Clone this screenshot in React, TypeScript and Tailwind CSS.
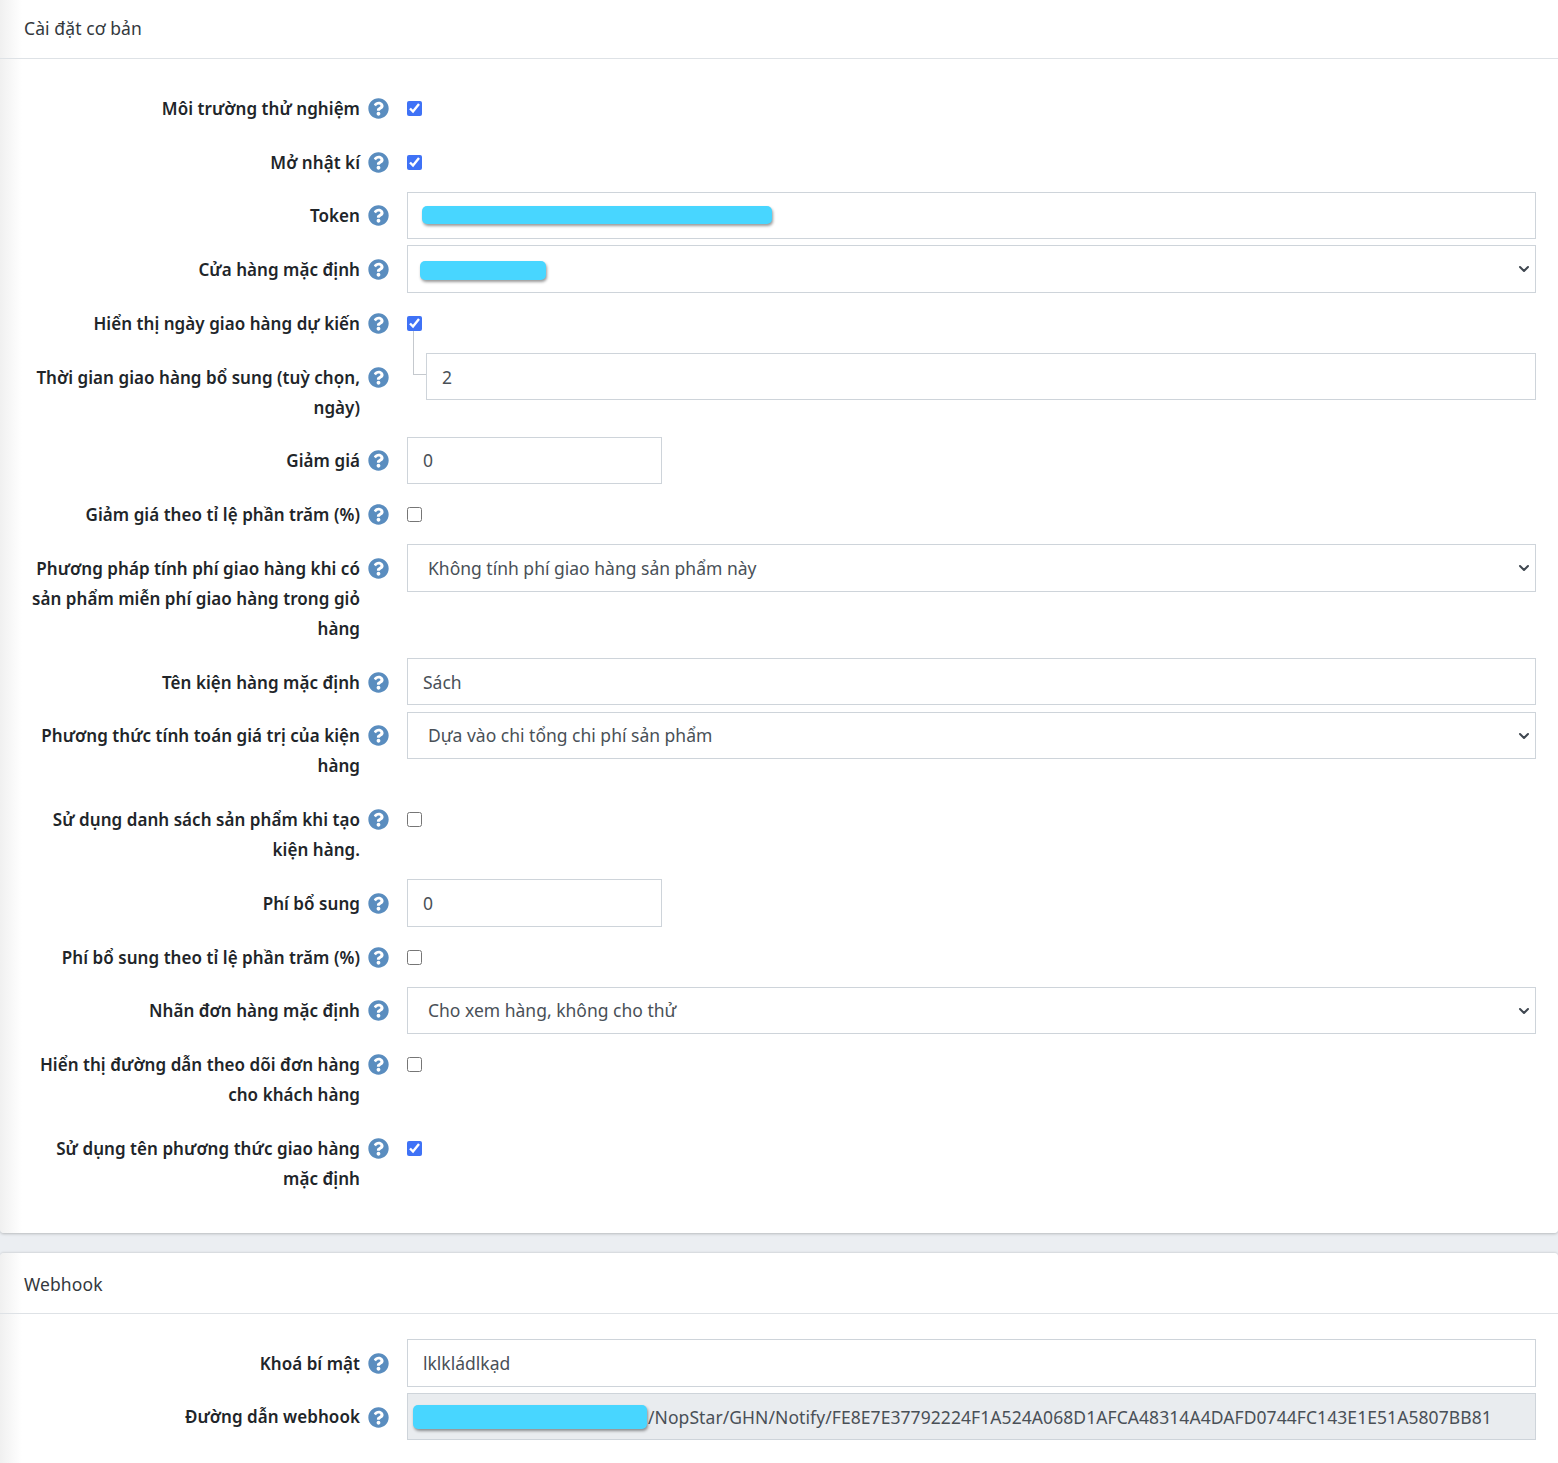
import { FaQuestionCircle } from "react-icons/fa";
import { ChevronDown } from "lucide-react";

const INPUT =
  "block w-full h-[47.5px] border border-[#ced4da] bg-white px-[15px] text-[17.5px] text-[#495057] outline-none";

function Blur({ className }: { className: string }) {
  return (
    <div
      className={`absolute rounded-[5px] bg-[#48d6ff] shadow-[1px_2px_3px_rgba(0,0,0,0.4)] ${className}`}
    />
  );
}

function Row({
  label,
  children,
  lines = 1,
}: {
  label: string;
  children: React.ReactNode;
  lines?: number;
}) {
  return (
    <div className="flex" style={{ height: 23.75 + lines * 30 }}>
      <div className="flex w-[407px] shrink-0 justify-end pt-[9.6px] pr-[18px]">
        <label className="w-[335px] text-right text-[17px] leading-[30px] font-semibold tracking-[0.05px] text-[#212529]">
          {label}
        </label>
        <FaQuestionCircle className="mt-[4.2px] ml-2 shrink-0 text-[21px] text-[#5a8dbf]" />
      </div>
      <div className="min-w-0 flex-1 pr-[22px]">{children}</div>
    </div>
  );
}

function Check({ checked }: { checked?: boolean }) {
  return (
    <input
      type="checkbox"
      readOnly
      checked={!!checked}
      className="mt-[16.6px] block h-[15px] w-[15px] accent-[#3f72f6]"
    />
  );
}

function Text({ value, short }: { value: string; short?: boolean }) {
  return <input readOnly value={value} className={`${INPUT} ${short ? "!w-[255px]" : ""}`} />;
}

function Select({ value, children }: { value: string; children?: React.ReactNode }) {
  return (
    <div className="relative">
      <select
        value={value}
        onChange={() => {}}
        className={`${INPUT} appearance-none rounded-none pl-[20px]`}
      >
        <option>{value}</option>
      </select>
      <ChevronDown
        strokeWidth={3}
        className="pointer-events-none absolute top-[16px] right-[4px] h-4 w-4 text-[#3f4750]"
      />
      {children}
    </div>
  );
}

export default function App() {
  return (
    <div className="min-h-[1463px] overflow-hidden bg-[#ebeef2] font-['Noto_Sans',sans-serif]">
      <section className="h-[1233px] rounded-b-[4px] bg-[linear-gradient(90deg,#f0f0f0,#fff_22px)] shadow-[0_1px_3px_rgba(0,0,0,0.22)]">
        <header className="h-[59px] border-b border-[#dee2e6] pt-[15px] pl-6 text-[17.5px] leading-[26px] tracking-[0.1px] text-[#33383d]">
          Cài đặt cơ bản
        </header>
        <div className="pt-[25.2px]">
          <Row label="Môi trường thử nghiệm">
            <Check checked />
          </Row>
          <Row label="Mở nhật kí">
            <Check checked />
          </Row>
          <Row label="Token">
            <div className="relative">
              <Text value="" />
              <Blur className="top-[14px] left-[15px] h-[18px] w-[350px]" />
            </div>
          </Row>
          <Row label="Cửa hàng mặc định">
            <Select value="">
              <Blur className="top-[16px] left-[13px] h-[19px] w-[126px]" />
            </Select>
          </Row>
          <Row label="Hiển thị ngày giao hàng dự kiến">
            <div className="relative">
              <Check checked />
              {/* nhanh noi tu checkbox xuong o nhap */}
              <div className="absolute top-[15px] left-[6px] h-[44px] w-[13px] border-b border-l border-[#c5c9ce]" />
            </div>
          </Row>
          <Row label="Thời gian giao hàng bổ sung (tuỳ chọn, ngày)" lines={2}>
            <div className="pl-[19px]">
              <Text value="2" />
            </div>
          </Row>
          <Row label="Giảm giá">
            <Text value="0" short />
          </Row>
          <Row label="Giảm giá theo tỉ lệ phần trăm (%)">
            <Check />
          </Row>
          <Row
            label="Phương pháp tính phí giao hàng khi có sản phẩm miễn phí giao hàng trong giỏ hàng"
            lines={3}
          >
            <Select value="Không tính phí giao hàng sản phẩm này" />
          </Row>
          <Row label="Tên kiện hàng mặc định">
            <Text value="Sách" />
          </Row>
          <Row label="Phương thức tính toán giá trị của kiện hàng" lines={2}>
            <Select value="Dựa vào chi tổng chi phí sản phẩm" />
          </Row>
          <Row label="Sử dụng danh sách sản phẩm khi tạo kiện hàng." lines={2}>
            <Check />
          </Row>
          <Row label="Phí bổ sung">
            <Text value="0" short />
          </Row>
          <Row label="Phí bổ sung theo tỉ lệ phần trăm (%)">
            <Check />
          </Row>
          <Row label="Nhãn đơn hàng mặc định">
            <Select value="Cho xem hàng, không cho thử" />
          </Row>
          <Row label="Hiển thị đường dẫn theo dõi đơn hàng cho khách hàng" lines={2}>
            <Check />
          </Row>
          <Row label="Sử dụng tên phương thức giao hàng mặc định" lines={2}>
            <Check checked />
          </Row>
        </div>
      </section>

      <section className="mt-[20px] h-[210px] rounded-t-[4px] bg-[linear-gradient(90deg,#f0f0f0,#fff_22px)] shadow-[0_-1px_2px_rgba(0,0,0,0.1)]">
        <header className="h-[61px] border-b border-[#dee2e6] pt-[18px] pl-6 text-[17.5px] leading-[26px] tracking-[0.1px] text-[#33383d]">
          Webhook
        </header>
        <div className="pt-[25px]">
          <Row label="Khoá bí mật">
            <Text value="lklkládlkạd" />
          </Row>
          <Row label="Đường dẫn webhook">
            <div className="relative">
              <input
                readOnly
                value="/NopStar/GHN/Notify/FE8E7E37792224F1A524A068D1AFCA48314A4DAFD0744FC143E1E51A5807BB81"
                className={`${INPUT} !bg-[#e9ecef] !pl-[240px] tracking-[0.07px]`}
              />
              <Blur className="top-[12px] left-[6px] h-[24px] w-[234px]" />
            </div>
          </Row>
        </div>
      </section>
    </div>
  );
}
